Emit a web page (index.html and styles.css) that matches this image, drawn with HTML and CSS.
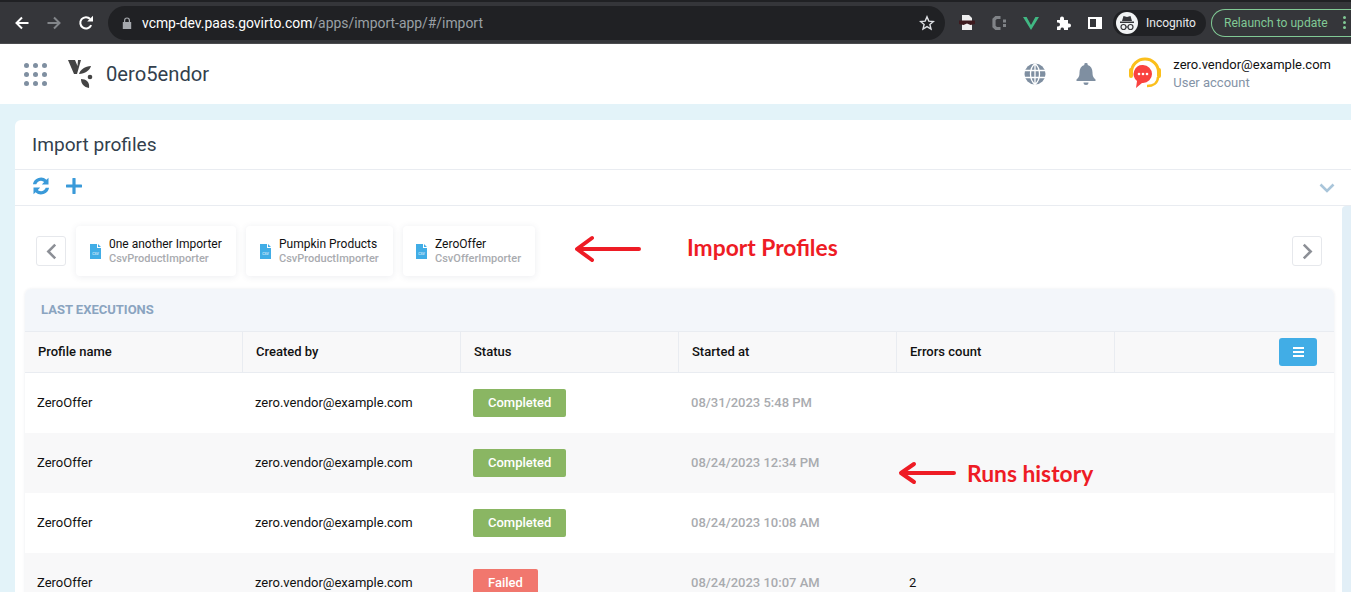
FILE: index.html
```html
<!DOCTYPE html>
<html lang="en">
<head>
    <meta charset="UTF-8">
    <title>Import profiles</title>
    <link rel="stylesheet" href="styles.css">
</head>
<body>
    <!-- browser toolbar -->
    <div class="browser">
        <svg class="nav-icon back" viewBox="0 0 16 16"><path d="M14.5 8H2.5M8 2.5L2.5 8L8 13.5" fill="none" stroke="#fff" stroke-width="2"/></svg>
        <svg class="nav-icon forward" viewBox="0 0 16 16"><path d="M1.5 8H13.5M8 2.5L13.5 8L8 13.5" fill="none" stroke="#83868a" stroke-width="2"/></svg>
        <svg class="nav-icon reload" viewBox="0 0 16 16"><path d="M13.2 10.2A5.7 5.7 0 1 1 12.2 4" fill="none" stroke="#fff" stroke-width="2"/><path d="M9.2 6.6H15V.8z" fill="#fff"/></svg>
        <div class="omnibox">
            <svg class="lock" viewBox="0 0 10 12"><path d="M2 5V3.4a3 3 0 0 1 6 0V5h1.2v7H.8V5zM3.2 5h3.6V3.4a1.8 1.8 0 0 0-3.6 0z" fill="#a5a8ad"/></svg>
            <span class="url"><b>vcmp-dev.paas.govirto.com</b>/apps/import-app/#/import</span>
            <svg class="star" viewBox="0 0 16 16"><path d="M8 1.8l1.8 4.3 4.6.4-3.5 3 1.1 4.5L8 11.6 4 14l1.1-4.5-3.5-3 4.6-.4z" fill="none" stroke="#dfe1e5" stroke-width="1.4"/></svg>
        </div>
        <div class="extensions">
            <svg class="ext ext-spy" viewBox="0 0 16 16"><path d="M3 0h7l3 3v12H3z" fill="#eee"/><path d="M0 5.500h16v3.500l-4.500 1-3.500-1.500L4.500 10 0 9z" fill="#3d1a1e"/></svg>
            <svg class="ext ext-c" viewBox="0 0 16 16"><path d="M9.500 2.500H5L3 4.500v7l2 2h4.500" fill="none" stroke="#808387" stroke-width="3.200"/><path d="M12 4.500h3v3h-3zM12 9h3v3h-3z" fill="#808387"/></svg>
            <svg class="ext ext-vue" viewBox="0 0 16 16"><path d="M0 2h3.600L8 10l4.400-8H16L8 15z" fill="#41b883"/></svg>
            <svg class="ext ext-puzzle" viewBox="0 0 16 16"><path d="M2 5h3V3.500a2 2 0 0 1 4 0V5h4v3.500h1a2 2 0 0 1 0 4h-1V15H9v-1a1.800 1.800 0 0 0-3.500 0v1H2v-3.500h1a2 2 0 0 0 0-4H2z" fill="#fff"/></svg>
            <svg class="ext ext-panel" viewBox="0 0 16 16"><path d="M1 2h14v12H1zM3 4v8h6V4z" fill="#fff" fill-rule="evenodd"/></svg>
        </div>
        <div class="incognito">
            <span class="spy-face">
                <svg viewBox="0 0 22 22"><path d="M4 9.500h14v1.500H4zM6 9l1.500-5 3.500 1 3.500-1L16 9z" fill="#35363a"/><circle cx="7.500" cy="15" r="2.500" fill="none" stroke="#35363a" stroke-width="1.200"/><circle cx="14.500" cy="15" r="2.500" fill="none" stroke="#35363a" stroke-width="1.200"/><path d="M10 15h2" stroke="#35363a"/></svg>
            </span>
            Incognito
        </div>
        <div class="relaunch">Relaunch to update<span class="dots"><i></i><i></i><i></i></span></div>
    </div>

    <!-- app header -->
    <header class="app-header">
        <span class="apps-grid"><i></i><i></i><i></i><i></i><i></i><i></i><i></i><i></i><i></i></span>
        <svg class="logo" viewBox="0 0 27 30"><path d="M1 1H8L10.500 7 11 1H14L10 15H7z" fill="#444"/><path d="M12 15C13 11 18 7 24 7 23 11 18 15 12 15z" fill="#444"/><path d="M14 20C19 20 23 23 22 29 17 28 14 25 14 20z" fill="#444"/><circle cx="23" cy="18" r="2.300" fill="#444"/></svg>
        <span class="brand">0ero5endor</span>
        <div class="header-right">
            <svg class="header-icon globe" viewBox="0 0 22 22"><circle cx="11" cy="11" r="10.500" fill="#7f8fa1"/><path d="M1 7.500h20M1 14.500h20M11 0v22M11 .5c-6 5-6 16 0 21M11 .5c6 5 6 16 0 21" fill="none" stroke="#fff" stroke-width="1.300"/></svg>
            <svg class="header-icon bell" viewBox="0 0 20 22"><path d="M10 0a1.600 1.600 0 0 1 1.600 2C15 3 16.500 6 16.500 9.500c0 4 1 5 3 7v1.500H.5v-1.500c2-2 3-3 3-7C3.500 6 5 3 8.400 2A1.600 1.600 0 0 1 10 0zM7.500 19.500h5a2.500 2.500 0 0 1-5 0z" fill="#7f8fa1"/></svg>
            <svg class="avatar" viewBox="0 0 36 34"><path d="M4.500 15a13.500 13 0 0 1 27 0" fill="none" stroke="#fbbf1c" stroke-width="3"/><rect x="2" y="11" width="4" height="10" rx="2" fill="#fbbf1c"/><rect x="30" y="11" width="4" height="10" rx="2" fill="#fbbf1c"/><path d="M31 20c0 6-5 9-11 9" fill="none" stroke="#fbbf1c" stroke-width="2.500"/><path d="M16 8a9 9 0 0 1 0 18h-1l-6 5 1-7a9 9 0 0 1 6-16z" fill="#f9423f"/><circle cx="12" cy="17" r="1.300" fill="#fff"/><circle cx="16" cy="17" r="1.300" fill="#fff"/><circle cx="20" cy="17" r="1.300" fill="#fff"/></svg>
            <div class="account">
                <div class="account-name">zero.vendor@example.com</div>
                <div class="account-role">User account</div>
            </div>
        </div>
    </header>

    <main class="page">
        <section class="blade">
            <h1 class="blade-title">Import profiles</h1>
            <div class="blade-toolbar">
                <svg class="tool-icon refresh" viewBox="0 0 18 18"><path d="M16.500 .8v6.700H9.800l2.400-2.400A4.800 4.800 0 0 0 4.300 7.200H.9A8.200 8.200 0 0 1 14.500 2.800zM1.500 17.200v-6.700h6.700l-2.400 2.400a4.800 4.800 0 0 0 7.900-2.100h3.400A8.200 8.200 0 0 1 3.500 15.200z" fill="#3a9ad9"/></svg>
                <svg class="tool-icon plus" viewBox="0 0 16 16"><path d="M8 1v14M1 8h14" stroke="#3a9ad9" stroke-width="3.200" stroke-linecap="round"/></svg>
                <svg class="collapse" viewBox="0 0 16 10"><path d="M1.500 1.500L8 8l6.500-6.500" fill="none" stroke="#a9c5da" stroke-width="2.600"/></svg>
            </div>
            <div class="blade-content">
                <div class="scrollbar"></div>
                <div class="carousel">
                    <button class="arrow">
                        <svg viewBox="0 0 10 16"><path d="M8.500 1.500L2 8l6.500 6.500" fill="none" stroke="#8c8f96" stroke-width="2.400"/></svg>
                    </button>
                    <div class="profile-card card-first">
                        <svg class="csv-icon" viewBox="0 0 11 15"><path d="M0 0h7v4h4v11H0zM8 0l3 3H8z" fill="#41ade6"/><text x="5.500" y="10.500" class="csv-label">CSV</text></svg>
                        <div><div class="profile-name">0ne another Importer</div><div class="profile-type">CsvProductImporter</div></div>
                    </div>
                    <div class="profile-card card-second">
                        <svg class="csv-icon" viewBox="0 0 11 15"><path d="M0 0h7v4h4v11H0zM8 0l3 3H8z" fill="#41ade6"/><text x="5.500" y="10.500" class="csv-label">CSV</text></svg>
                        <div><div class="profile-name">Pumpkin Products</div><div class="profile-type">CsvProductImporter</div></div>
                    </div>
                    <div class="profile-card card-third">
                        <svg class="csv-icon" viewBox="0 0 11 15"><path d="M0 0h7v4h4v11H0zM8 0l3 3H8z" fill="#41ade6"/><text x="5.500" y="10.500" class="csv-label">CSV</text></svg>
                        <div><div class="profile-name">ZeroOffer</div><div class="profile-type">CsvOfferImporter</div></div>
                    </div>
                    <button class="arrow arrow-next">
                        <svg viewBox="0 0 10 16"><path d="M1.500 1.500L8 8l-6.500 6.500" fill="none" stroke="#8c8f96" stroke-width="2.400"/></svg>
                    </button>
                </div>
                <div class="executions">
                    <div class="executions-title">LAST EXECUTIONS</div>
                    <div class="row row-head">
                        <div class="cell">Profile name</div>
                        <div class="cell">Created by</div>
                        <div class="cell">Status</div>
                        <div class="cell">Started at</div>
                        <div class="cell">Errors count</div>
                        <div class="cell cell-menu"><span class="menu-btn"><i></i><i></i><i></i></span></div>
                    </div>
                    <div class="row">
                        <div class="cell">ZeroOffer</div>
                        <div class="cell">zero.vendor@example.com</div>
                        <div class="cell"><span class="status ok">Completed</span></div>
                        <div class="cell date">08/31/2023 5:48 PM</div>
                        <div class="cell"></div>
                        <div class="cell"></div>
                    </div>
                    <div class="row row-alt">
                        <div class="cell">ZeroOffer</div>
                        <div class="cell">zero.vendor@example.com</div>
                        <div class="cell"><span class="status ok">Completed</span></div>
                        <div class="cell date">08/24/2023 12:34 PM</div>
                        <div class="cell"></div>
                        <div class="cell"></div>
                    </div>
                    <div class="row">
                        <div class="cell">ZeroOffer</div>
                        <div class="cell">zero.vendor@example.com</div>
                        <div class="cell"><span class="status ok">Completed</span></div>
                        <div class="cell date">08/24/2023 10:08 AM</div>
                        <div class="cell"></div>
                        <div class="cell"></div>
                    </div>
                    <div class="row row-alt">
                        <div class="cell">ZeroOffer</div>
                        <div class="cell">zero.vendor@example.com</div>
                        <div class="cell"><span class="status failed">Failed</span></div>
                        <div class="cell date">08/24/2023 10:07 AM</div>
                        <div class="cell">2</div>
                        <div class="cell"></div>
                    </div>
                </div>
            </div>
        </section>
    </main>

    <!-- red notes drawn over the screenshot -->
    <svg class="note-arrow note-arrow-1" viewBox="0 0 68 28"><path d="M65 14H4M18 3L3 14l15 11" fill="none" stroke="#ee1c25" stroke-width="4" stroke-linecap="round" stroke-linejoin="round"/></svg>
    <div class="note note-1">Import Profiles</div>
    <svg class="note-arrow note-arrow-2" viewBox="0 0 58 24"><path d="M56 12H4M16 3L3 12l13 9" fill="none" stroke="#ee1c25" stroke-width="4" stroke-linecap="round" stroke-linejoin="round"/></svg>
    <div class="note note-2">Runs history</div>
</body>
</html>
```

FILE: styles.css
```css
html, body {
    height: 100%;
}
body {
    margin: 0;
    height: 592px;
    overflow: hidden;
    position: relative;
    background-color: #e3f3f9;
    font-family: Roboto, "Liberation Sans", sans-serif;
    color: #111;
}

/* browser toolbar */
.browser {
    height: 41px;
    border-top: 2px solid #202124;
    border-bottom: 1px solid #4a4b4e;
    background-color: #35363a;
    display: flex;
    align-items: center;
}
.nav-icon {
    width: 16px;
    height: 16px;
    flex: none;
}
.back {
    margin-left: 14px;
}
.forward {
    margin-left: 16px;
}
.reload {
    margin-left: 16px;
}
.omnibox {
    margin-left: 14px;
    width: 837px;
    height: 34px;
    border-radius: 17px;
    background-color: #202124;
    display: flex;
    align-items: center;
    flex: none;
}
.lock {
    width: 10px;
    height: 12px;
    margin-left: 14px;
}
.url {
    margin-left: 10px;
    font-size: 13.900px;
    color: #9aa0a6;
    white-space: nowrap;
}
.url b {
    font-weight: 400;
    color: #fff;
}
.star {
    width: 16px;
    height: 16px;
    margin-left: auto;
    margin-right: 10px;
}
.extensions {
    display: flex;
    align-items: center;
    gap: 16px;
    margin-left: 14px;
}
.ext {
    width: 16px;
    height: 16px;
    flex: none;
}
.incognito {
    margin-left: 10px;
    width: 93px;
    height: 26px;
    border-radius: 13px;
    background-color: #202124;
    color: #e8eaed;
    font-size: 12px;
    display: flex;
    align-items: center;
    gap: 8px;
    flex: none;
}
.spy-face {
    width: 22px;
    height: 22px;
    border-radius: 50%;
    background-color: #f1f3f4;
    margin-left: 3px;
    display: block;
}
.spy-face svg {
    display: block;
}
.relaunch {
    margin-left: 5px;
    width: 140px;
    height: 26px;
    padding-left: 12px;
    border: 1px solid #81c995;
    border-right: none;
    border-radius: 14px 0 0 14px;
    color: #81c995;
    font-size: 12.100px;
    display: flex;
    align-items: center;
    white-space: nowrap;
    flex: none;
}
.dots {
    margin-left: 15px;
    display: flex;
    flex-direction: column;
    gap: 2px;
}
.dots i {
    width: 3px;
    height: 3px;
    border-radius: 50%;
    background-color: #81c995;
}

/* app header */
.app-header {
    height: 60px;
    background-color: #fff;
    display: flex;
    align-items: center;
}
.apps-grid {
    margin-left: 24px;
    width: 23px;
    display: grid;
    grid-template-columns: repeat(3, 5px);
    gap: 4px;
}
.apps-grid i {
    width: 5px;
    height: 5px;
    border-radius: 50%;
    background-color: #7f8fa1;
}
.logo {
    width: 27px;
    height: 30px;
    margin-left: 20px;
}
.brand {
    margin-left: 12px;
    font-size: 20.200px;
    color: #333f4d;
}
.header-right {
    margin-left: auto;
    display: flex;
    align-items: center;
    margin-right: 20px;
}
.globe {
    width: 22px;
    height: 22px;
}
.bell {
    width: 20px;
    height: 22px;
    margin-left: 30px;
}
.avatar {
    width: 36px;
    height: 34px;
    margin-left: 31px;
}
.account {
    margin-left: 10px;
}
.account-name {
    font-size: 13px;
    line-height: 18px;
    margin-top: -2px;
    color: #111;
}
.account-role {
    font-size: 13px;
    line-height: 18px;
    margin-bottom: -1px;
    color: #8493a6;
}

/* blade */
.page {
    padding: 16px 0 0 15px;
}
.blade {
    height: 472px;
    background-color: #fff;
    border-radius: 6px 0 0 0;
    overflow: hidden;
}
.blade-title {
    margin: 0;
    height: 49px;
    padding-left: 17px;
    font-size: 19.100px;
    font-weight: 400;
    line-height: 49px;
    color: #333f4d;
    border-bottom: 1px solid #e9ecf1;
}
.blade-toolbar {
    height: 36px;
    padding: 0 16px 3px 17px;
    box-sizing: border-box;
    display: flex;
    align-items: center;
    gap: 16px;
    border-bottom: 1px solid #e9ecf1;
}
.refresh {
    width: 18px;
    height: 18px;
}
.plus {
    width: 16px;
    height: 16px;
}
.collapse {
    width: 16px;
    height: 10px;
    margin-left: auto;
    margin-top: 3px;
}
.blade-content {
    position: relative;
    padding-left: 10px;
}
.scrollbar {
    position: absolute;
    top: 0;
    right: 0;
    width: 9px;
    height: 100%;
    border-radius: 4px 0 0 0;
    background-color: #e2eff7;
}

/* profiles carousel */
.carousel {
    height: 83px;
    width: 1309px;
    display: flex;
    align-items: flex-start;
    padding-top: 20px;
    box-sizing: border-box;
    position: relative;
}
.arrow {
    width: 30px;
    height: 30px;
    margin: 10px 0 0 11px;
    padding: 0;
    background-color: #fff;
    border: 1px solid #e6e8ec;
    border-radius: 3px;
    display: flex;
    align-items: center;
    justify-content: center;
    flex: none;
}
.arrow svg {
    width: 11px;
    height: 17px;
}
.arrow-next {
    margin-left: auto;
    margin-right: 12px;
}
.profile-card {
    height: 50px;
    box-sizing: border-box;
    background-color: #fff;
    border-radius: 4px;
    box-shadow: 0 1px 7px rgba(40, 60, 90, 0.09);
    display: flex;
    align-items: center;
    padding-left: 14px;
    flex: none;
}
.card-first {
    width: 160px;
    margin-left: 10px;
}
.card-second {
    width: 147px;
    margin-left: 10px;
}
.card-third {
    width: 132px;
    margin-left: 10px;
    padding-left: 13px;
}
.csv-icon {
    width: 11px;
    height: 15px;
    margin-right: 8px;
    flex: none;
}
.csv-label {
    font-size: 3.500px;
    fill: #fff;
    text-anchor: middle;
}
.profile-name {
    font-size: 12px;
    line-height: 15px;
    color: #111;
    white-space: nowrap;
}
.profile-type {
    font-size: 11px;
    font-weight: 500;
    line-height: 14px;
    color: #a9abaf;
    white-space: nowrap;
}

/* last executions */
.executions {
    width: 1309px;
    border-radius: 6px 6px 0 0;
    box-shadow: 0 0 3px rgba(40, 60, 90, 0.1);
}
.executions-title {
    height: 42px;
    line-height: 42px;
    padding-left: 16px;
    font-size: 13px;
    font-weight: 700;
    color: #8aa4c0;
    background-color: #f3f6fa;
    border-bottom: 1px solid #e9ecf1;
    border-radius: 6px 6px 0 0;
}
.row {
    display: grid;
    grid-template-columns: repeat(5, 218px) 1fr;
    height: 60px;
    background-color: #fff;
}
.row-alt {
    background-color: #f8f8f9;
}
.row-head {
    height: 40px;
    background-color: #f8f8f9;
    border-bottom: 1px solid #e9ecf1;
}
.cell {
    display: flex;
    align-items: center;
    padding-left: 12px;
    padding-bottom: 2px;
    box-sizing: border-box;
    font-size: 13px;
    color: #111;
}
.row-head .cell {
    padding-left: 13px;
    font-weight: 500;
    border-right: 1px solid #e9ecf1;
}
.row-head .cell-menu {
    border-right: none;
    justify-content: flex-end;
    padding-right: 17px;
}
.menu-btn {
    width: 38px;
    height: 28px;
    margin-top: 2px;
    border-radius: 3px;
    background-color: #41ade6;
    display: flex;
    flex-direction: column;
    align-items: center;
    justify-content: center;
    gap: 2px;
}
.menu-btn i {
    width: 11px;
    height: 2px;
    background-color: #fff;
}
.status {
    padding: 0 15px;
    height: 28px;
    margin-top: 2px;
    line-height: 28px;
    border-radius: 2px;
    color: #fff;
    font-weight: 500;
}
.ok {
    background-color: #8ab663;
}
.failed {
    background-color: #f1776e;
}
.date {
    color: #a9abaf;
    font-weight: 500;
}

/* notes */
.note-arrow {
    position: absolute;
}
.note-arrow-1 {
    left: 574px;
    top: 235px;
    width: 68px;
    height: 28px;
}
.note-arrow-2 {
    left: 898px;
    top: 461px;
    width: 58px;
    height: 24px;
}
.note {
    position: absolute;
    font-family: Lato, "Open Sans", sans-serif;
    font-weight: 700;
    font-size: 22.800px;
    line-height: 26px;
    color: #ee1c25;
    white-space: nowrap;
}
.note-1 {
    left: 687px;
    top: 234px;
}
.note-2 {
    left: 967px;
    top: 460px;
}
```
